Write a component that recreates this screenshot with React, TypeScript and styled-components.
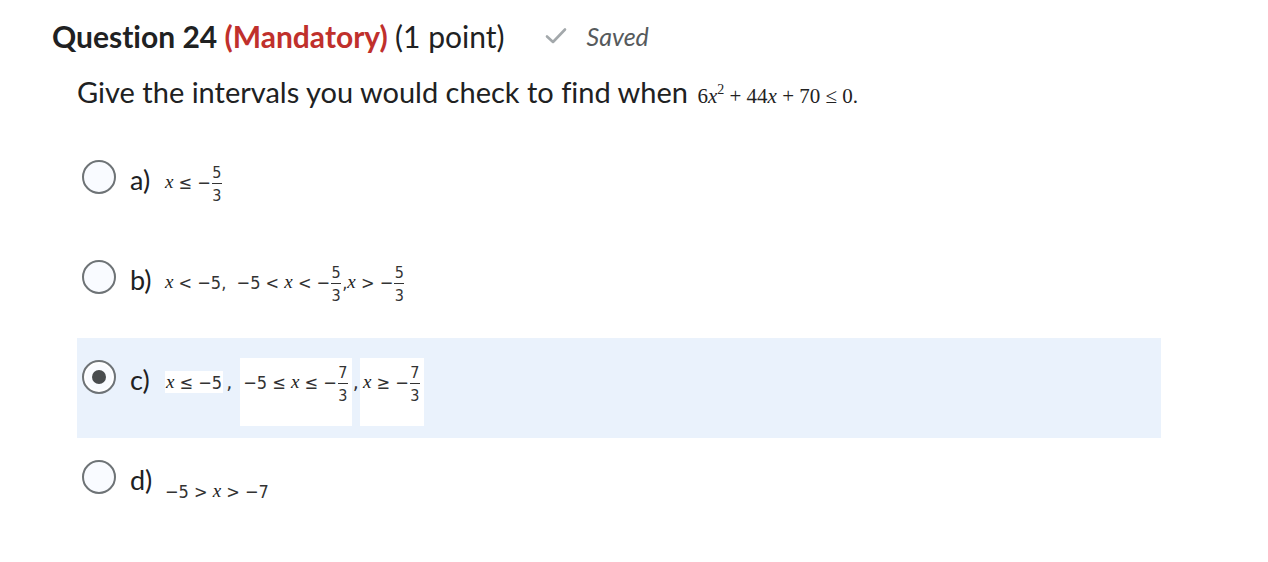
import React from 'react';
import styled, { createGlobalStyle } from 'styled-components';

const GlobalStyle = createGlobalStyle`
  html, body {
    margin: 0;
    padding: 0;
    background: #fff;
  }
  body {
    font-family: Lato, "Noto Sans", sans-serif;
    color: #202122;
    font-variant-ligatures: none;
  }
`;

const Page = styled.div`
  padding: 15px 0 0 52px;
  width: 1216px;
`;

const Header = styled.div`
  display: flex;
  align-items: center;
  gap: 40px;
  height: 42px;
`;

const Title = styled.h2`
  margin: 0;
  font-size: 30px;
  font-weight: 700;
`;

const Mandatory = styled.span`
  color: #c0302c;
`;

const Points = styled.span`
  font-weight: 400;
`;

const SavedTag = styled.div`
  display: flex;
  align-items: center;
  gap: 20px;
  font-size: 25px;
  font-style: italic;
  color: #565a5c;
`;

const Body = styled.div`
  padding-left: 25px;
`;

const Prompt = styled.p`
  margin: 17px 0 24px;
  font-size: 29px;
  line-height: 36px;
`;

const Math = styled.span`
  font-family: "Liberation Serif", "DejaVu Serif", serif;
  font-size: 21px;
  color: #222;
  white-space: nowrap;
  margin-left: 2px;
`;

const Var = styled.i`
  font-style: italic;
  font-family: "Liberation Serif", "DejaVu Serif", serif;
`;

const Sup = styled.sup`
  font-size: 14px;
  vertical-align: 9px;
  line-height: 0;
`;

const Options = styled.div`
  display: flex;
  flex-direction: column;
  width: 1084px;
`;

const Row = styled.label<{ $selected?: boolean }>`
  display: flex;
  align-items: flex-start;
  height: 100px;
  padding: 22px 0 0 5px;
  box-sizing: border-box;
  background: ${(p) => (p.$selected ? '#eaf2fc' : 'transparent')};
`;

const Radio = styled.span<{ $checked?: boolean }>`
  width: 34px;
  height: 34px;
  box-sizing: border-box;
  border-radius: 50%;
  border: 2px solid #6e7376;
  background: #f9fbff;
  display: flex;
  align-items: center;
  justify-content: center;
  flex-shrink: 0;
  box-shadow: ${(p) => (p.$checked ? 'inset 0 0 0 2px #fff' : 'none')};
  &::after {
    content: '';
    display: ${(p) => (p.$checked ? 'block' : 'none')};
    width: 14px;
    height: 14px;
    border-radius: 50%;
    background: #494c4e;
  }
`;

const Letter = styled.span`
  font-size: 27px;
  line-height: 34px;
  margin: 3px 0 0 14px;
  width: 35px;
  flex-shrink: 0;
`;

const Line = styled.span<{ $drop?: number }>`
  display: inline-flex;
  align-items: center;
  height: 40px;
  margin-top: ${(p) => 2 + (p.$drop ?? 0)}px;
  font-size: 19px;
  color: #222;
  white-space: pre;
`;

const Sans = styled.span`
  font-family: "DejaVu Sans Condensed", "DejaVu Sans", sans-serif;
  font-size: 18px;
  color: #333;
`;

const SmallBox = styled.span`
  display: inline-flex;
  align-items: center;
  height: 22px;
  padding: 0 1px;
  background: #fff;
`;

const TallBox = styled.span`
  display: inline-flex;
  align-items: center;
  position: relative;
  isolation: isolate;
  padding: 0 3px;
  &::before {
    content: '';
    position: absolute;
    left: 0;
    right: 0;
    top: calc(50% - 24px);
    height: 68px;
    background: #fff;
    z-index: -1;
  }
`;

const Comma = styled.span<{ $wide?: boolean }>`
  font-family: "DejaVu Sans", sans-serif;
  font-size: 19px;
  margin: ${(p) => (p.$wide ? '0 8px 0 3px' : '0 1px')};
  color: #333;
`;

const FracWrap = styled.span`
  display: inline-flex;
  flex-direction: column;
  align-items: center;
  font-family: "DejaVu Sans Condensed", "DejaVu Sans", sans-serif;
  font-size: 16px;
  line-height: 17px;
  color: #333;
  margin: 0 1px;
  transform: translateY(2px);
`;

const FracBar = styled.span`
  width: 10px;
  height: 1px;
  background: #333;
  margin: 2px 0 3px;
`;

const Frac = ({ n, d }: { n: string; d: string }) => (
  <FracWrap>
    <span>{n}</span>
    <FracBar />
    <span>{d}</span>
  </FracWrap>
);

const Check = () => (
  <svg width="22" height="18" viewBox="0 0 22 18">
    <path d="M2 9.5 L8 15 L20 2.5" fill="none" stroke="#a3a8ab" strokeWidth="2.6" strokeLinecap="round" strokeLinejoin="round" />
  </svg>
);

const X = () => <Var>x</Var>;

export default function App() {
  return (
    <>
      <GlobalStyle />
      <Page>
        <Header>
          <Title>
            Question 24 <Mandatory>(Mandatory)</Mandatory> <Points>(1 point)</Points>
          </Title>
          <SavedTag>
            <Check />
            Saved
          </SavedTag>
        </Header>
        <Body>
          <Prompt>
            Give the intervals you would check to find when{' '}
            <Math>
              6<Var>x</Var>
              <Sup>2</Sup> + 44<Var>x</Var> + 70 ≤ 0.
            </Math>
          </Prompt>
          <Options>
            <Row>
              <Radio />
              <Letter>a)</Letter>
              <Line>
                <X /><Sans> ≤ −</Sans>
                <Frac n="5" d="3" />
              </Line>
            </Row>
            <Row>
              <Radio />
              <Letter>b)</Letter>
              <Line>
                <X /><Sans> &lt; −5,  −5 &lt; </Sans><X /><Sans> &lt; −</Sans>
                <Frac n="5" d="3" />
                <Sans>,</Sans><X /><Sans> &gt; −</Sans>
                <Frac n="5" d="3" />
              </Line>
            </Row>
            <Row $selected>
              <Radio $checked />
              <Letter>c)</Letter>
              <Line>
                <SmallBox>
                  <X /><Sans> ≤ −5</Sans>
                </SmallBox>
                <Comma $wide>,</Comma>
                <TallBox>
                  <Sans>−5 ≤ </Sans><X /><Sans> ≤ −</Sans>
                  <Frac n="7" d="3" />
                </TallBox>
                <Comma>,</Comma>
                <TallBox>
                  <X /><Sans> ≥ −</Sans>
                  <Frac n="7" d="3" />
                </TallBox>
              </Line>
            </Row>
            <Row>
              <Radio />
              <Letter>d)</Letter>
              <Line $drop={9}>
                <Sans>−5 &gt; </Sans><X /><Sans> &gt; −7</Sans>
              </Line>
            </Row>
          </Options>
        </Body>
      </Page>
    </>
  );
}
